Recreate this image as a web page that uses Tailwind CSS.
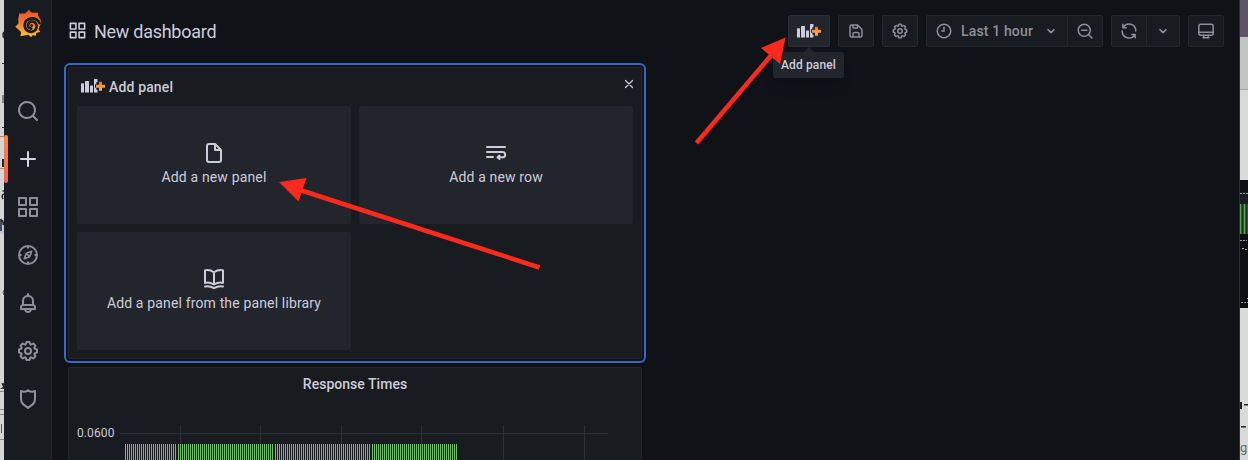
<!DOCTYPE html>
<html lang="en">
<head>
<meta charset="utf-8">
<title>New dashboard</title>
<script src="https://cdn.jsdelivr.net/npm/@tailwindcss/browser@4"></script>
</head>
<body class="w-[1248px] h-[460px] overflow-hidden bg-[#111217] font-['Roboto',sans-serif] text-[#ccccdc] text-sm">
<svg class="absolute size-0">
  <defs>
    <linearGradient id="flame" gradientUnits="userSpaceOnUse" x1="0" y1="10" x2="0" y2="37"><stop offset="0" stop-color="#f04e2c"/><stop offset=".45" stop-color="#f47a30"/><stop offset="1" stop-color="#fcc22c"/></linearGradient>
    <linearGradient id="plusfill" x1="0" y1="0" x2="0" y2="1"><stop offset="0" stop-color="#f2663a"/><stop offset=".5" stop-color="#f59a3c"/><stop offset="1" stop-color="#f5b73d"/></linearGradient>
    <symbol id="apps" viewBox="0 0 24 24"><path d="M10,13H3a1,1,0,0,0-1,1v7a1,1,0,0,0,1,1h7a1,1,0,0,0,1-1V14A1,1,0,0,0,10,13ZM9,20H4V15H9ZM21,2H14a1,1,0,0,0-1,1v7a1,1,0,0,0,1,1h7a1,1,0,0,0,1-1V3A1,1,0,0,0,21,2ZM20,9H15V4h5Zm1,4H14a1,1,0,0,0-1,1v7a1,1,0,0,0,1,1h7a1,1,0,0,0,1-1V14A1,1,0,0,0,21,13Zm-1,7H15V15h5ZM10,2H3A1,1,0,0,0,2,3v7a1,1,0,0,0,1,1h7a1,1,0,0,0,1-1V3A1,1,0,0,0,10,2ZM9,9H4V4H9Z"/></symbol>
    <symbol id="cog" viewBox="0 0 24 24"><path d="M21.32,9.55l-1.89-.63.89-1.78A1,1,0,0,0,20.13,6L18,3.87a1,1,0,0,0-1.15-.19l-1.78.89-.63-1.89A1,1,0,0,0,13.5,2h-3a1,1,0,0,0-.95.68L8.92,4.57,7.14,3.68A1,1,0,0,0,6,3.87L3.87,6a1,1,0,0,0-.19,1.15l.89,1.78-1.89.63A1,1,0,0,0,2,10.5v3a1,1,0,0,0,.68.95l1.89.63-.89,1.78A1,1,0,0,0,3.87,18L6,20.13a1,1,0,0,0,1.15.19l1.78-.89.63,1.89a1,1,0,0,0,.95.68h3a1,1,0,0,0,.95-.68l.63-1.89,1.78.89A1,1,0,0,0,18,20.13L20.13,18a1,1,0,0,0,.19-1.15l-.89-1.78,1.89-.63A1,1,0,0,0,22,13.5v-3A1,1,0,0,0,21.32,9.55ZM20,12.78l-1.2.4A2,2,0,0,0,17.64,16l.57,1.14-1.1,1.1L16,17.64a2,2,0,0,0-2.79,1.16l-.4,1.2H11.22l-.4-1.2A2,2,0,0,0,8,17.64l-1.14.57-1.1-1.1L6.36,16A2,2,0,0,0,5.2,13.18L4,12.78V11.22l1.2-.4A2,2,0,0,0,6.36,8L5.79,6.89l1.1-1.1L8,6.36A2,2,0,0,0,10.82,5.2l.4-1.2h1.56l.4,1.2A2,2,0,0,0,16,6.36l1.14-.57,1.1,1.1L17.64,8a2,2,0,0,0,1.16,2.79l1.2.4ZM12,8a4,4,0,1,0,4,4A4,4,0,0,0,12,8Zm0,6a2,2,0,1,1,2-2A2,2,0,0,1,12,14Z"/></symbol>
    <symbol id="chevron" viewBox="0 0 24 24"><path d="M8 10.200l4 4 4-4" fill="none" stroke="currentColor" stroke-width="2" stroke-linecap="round" stroke-linejoin="round"/></symbol>
    <symbol id="panel-add" viewBox="0 0 24 14"><path fill="#ccccdc" d="M0 4.700q0-.5.5-.5h2q.5 0 .5.500v8.800H0zM4 2.500q0-.5.5-.5h3q.5 0 .5.500v11H4zM9 7q0-.5.500-.5h2q.5 0 .5.500v6.500H9zM13 .5q0-.5.500-.5h2.500q.5 0 .5.500v2.700h-1.200v2H14v3.600h1.300v2h1.200v2.200q0 .5-.5.500H13z"/><path fill="url(#plusfill)" d="M18 2.700h3v3h3v3h-3v3h-3v-3h-3v-3h3z"/></symbol>
  </defs>
</svg>
<div class="relative flex h-full">
  <!-- Sliver of the window behind, left edge -->
  <div class="relative w-1 shrink-0 bg-[#d5d5d5] overflow-hidden">
    <svg class="block" width="4" height="460" viewBox="0 0 4 460">
      <path stroke="#333" fill="none" d="M2 63.500h2M2 127.500h2M3 95v8"/>
      <path stroke="#222" stroke-width="1.500" fill="none" d="M4 32q-2 3 0 6"/>
      <path stroke="#e8753d" fill="none" d="M0 136.500h4M0 168.500h4"/>
      <path stroke="#1d2740" stroke-width="2" d="M3 159v8"/>
      <path fill="#b9c6dc" d="M0 218h4v16H0z"/>
      <path stroke="#222" stroke-width="1.500" fill="none" d="M4 191h-1.500M4 194q-3 1-1 5M1 219v12M1 220q3 1 2 5M4 384h-1.500l1.500 3-1.500 1h2"/>
      <path stroke="#4550a8" fill="none" d="M4 290q-2 2 0 5"/>
      <path stroke="#888" d="M0 391.500h4M0 409.500h4M0 414.500h4M0 439.500h4"/>
      <path stroke="#555" d="M1.500 424v9"/>
    </svg>
  </div>

  <nav class="relative w-12 shrink-0 bg-[#181b1f] border-r border-[#24262b] flex flex-col items-center text-[#8e8f99] fill-current">
    <svg class="mt-[9px] w-7 h-[29px] shrink-0" viewBox="14 9 28 29">
      <path fill="url(#flame)" d="M29.200 9.800Q30.500 12.600 32.200 12.800L38 12.800Q37.500 15.800 39 17.300 41 19.500 41.300 23L39.800 25.500 38.500 29.500 40.300 32 36.500 32.700 35.500 36 32.800 35 31 37.200 28.500 34.800 20.500 36.300 21 32 19.500 30.500 15.200 26.700 18.500 23.500 18.200 19.200 19.200 13.500 25 13.600z"/>
      <path fill="none" stroke="#181b1f" stroke-width="2.600" stroke-linecap="round" d="M39.700 23.200Q37 18.200 31.500 18.400 24.800 19.300 24.600 25.500 25.300 31.700 31.600 31.900 36.600 31 36.700 25.800 35.800 21.300 31.300 21.500 27.800 22.300 27.900 25.800 28.600 28.700 31.300 28.600"/>
      <circle cx="31.600" cy="25.500" r="1.500" fill="#181b1f"/>
    </svg>
    <svg class="mt-[61px] size-6 shrink-0" viewBox="0 0 24 24"><path d="M21.71,20.29,18,16.61A9,9,0,1,0,16.61,18l3.68,3.68a1,1,0,0,0,1.42,0A1,1,0,0,0,21.71,20.29ZM11,18a7,7,0,1,1,7-7A7,7,0,0,1,11,18Z"/></svg>
    <div class="relative mt-3 h-12 w-full flex items-center justify-center text-[#d5d5e2]">
      <div class="absolute left-0 top-0 h-12 w-1 rounded-[2px] bg-linear-to-b from-[#ff8833] to-[#f55f53]"></div>
      <svg class="size-6" viewBox="0 0 24 24"><path d="M19,11H13V5a1,1,0,0,0-2,0v6H5a1,1,0,0,0,0,2h6v6a1,1,0,0,0,2,0V13h6a1,1,0,0,0,0-2Z"/></svg>
    </div>
    <svg class="mt-3 size-6 shrink-0"><use href="#apps"/></svg>
    <svg class="mt-6 size-6 shrink-0" viewBox="0 0 24 24" fill="none" stroke="currentColor" stroke-width="2"><circle cx="12" cy="12" r="9"/><path stroke-linejoin="round" d="M15.700 8.300l-2 5.400-5.400 2 2-5.400zM10.500 10.500l3 3" stroke-width="1.700"/><path d="M12 3v2.500M12 18.500V21M3 12h2.500M18.500 12H21"/></svg>
    <svg class="mt-6 size-6 shrink-0" viewBox="0 0 24 24"><path d="M18,13.180V10a6,6,0,0,0-5-5.910V3a1,1,0,0,0-2,0V4.090A6,6,0,0,0,6,10v3.180A3,3,0,0,0,4,16v2a1,1,0,0,0,1,1H8.140a4,4,0,0,0,7.720,0H19a1,1,0,0,0,1-1V16A3,3,0,0,0,18,13.180ZM8,10a4,4,0,0,1,8,0v3H8Zm4,10a2,2,0,0,1-1.720-1h3.440A2,2,0,0,1,12,20Zm6-3H6V16a1,1,0,0,1,1-1H17a1,1,0,0,1,1,1Z"/></svg>
    <svg class="mt-6 size-6 shrink-0"><use href="#cog"/></svg>
    <svg class="mt-6 size-6 shrink-0" viewBox="0 0 24 24" fill="none" stroke="currentColor" stroke-width="2" stroke-linejoin="round"><path d="M12 3.300q3.500 2.300 7 .7v7.900q0 3.700-3 6L12 20.900 8 17.900q-3-2.300-3-6V4q3.500 1.600 7-.7z"/></svg>
  </nav>

  <main class="flex-1 min-w-0 border-r border-[#2c2d33]">
    <header class="flex h-[63px] items-start pl-4 pr-[15px] pt-[15px] text-[#8e8f99]">
      <div class="flex items-center h-8 text-[#ccccdc]">
        <svg class="w-[19px] h-[19px] -mt-[2px] fill-current"><use href="#apps"/></svg>
        <h1 class="ml-[7px] mt-[2px] text-[18px] leading-8 tracking-[-0.27px]">New dashboard</h1>
      </div>
      <div class="ml-auto flex gap-2 fill-current">
        <div class="relative w-[42px] h-8 rounded-[2px] bg-[#22252b] border border-[#2d2f36] flex items-center justify-center">
          <svg class="w-6 h-[14px]"><use href="#panel-add"/></svg>
          <div class="absolute left-[-16px] top-[36px] w-[71px] h-[26px] rounded-[2px] bg-[#22252b] text-[#ccccdc] text-xs font-medium leading-[26px] text-center tracking-[0.15px] whitespace-nowrap shadow-lg">Add panel
            <div class="absolute left-[31px] -top-[5px] border-x-[5px] border-b-[5px] border-x-transparent border-b-[#22252b]"></div>
          </div>
        </div>
        <div class="w-9 h-8 rounded-[2px] bg-[#181b1f] border border-[#25272c] flex items-center justify-center">
          <svg class="size-[18px]" viewBox="0 0 24 24"><path d="M20.710,9.290l-6-6a1,1,0,0,0-.32-.21A1.090,1.090,0,0,0,14,3H6A3,3,0,0,0,3,6V18a3,3,0,0,0,3,3H18a3,3,0,0,0,3-3V10A1,1,0,0,0,20.710,9.290ZM9,5h4V7H9Zm6,14H9V16a1,1,0,0,1,1-1h4a1,1,0,0,1,1,1Zm4-1a1,1,0,0,1-1,1H17V16a3,3,0,0,0-3-3H10a3,3,0,0,0-3,3v3H6a1,1,0,0,1-1-1V6A1,1,0,0,1,6,5H7V8A1,1,0,0,0,8,9h6a1,1,0,0,0,1-1V6.410l4,4Z"/></svg>
        </div>
        <div class="w-9 h-8 rounded-[2px] bg-[#181b1f] border border-[#25272c] flex items-center justify-center"><svg class="size-[18px]"><use href="#cog"/></svg></div>
        <div class="flex h-8 w-[177px] rounded-[2px] bg-[#181b1f] border border-[#25272c]">
          <div class="flex items-center w-[141px] pl-2 border-r border-[#25272c]">
            <svg class="size-[18px]" viewBox="0 0 24 24" fill="none" stroke="currentColor" stroke-width="2" stroke-linecap="round"><circle cx="12" cy="12" r="9"/><path d="M12 7v5H9"/></svg>
            <span class="ml-2 text-sm font-medium tracking-[0.15px] whitespace-nowrap">Last 1 hour</span>
            <svg class="ml-auto mr-[7px] size-[18px]"><use href="#chevron"/></svg>
          </div>
          <div class="flex-1 flex items-center justify-center"><svg class="size-[18px]" viewBox="0 0 24 24" fill="none" stroke="currentColor" stroke-width="2" stroke-linecap="round"><circle cx="11" cy="11" r="8"/><path d="M17 17l4.200 4.200M7.500 11h7"/></svg></div>
        </div>
        <div class="flex h-8 w-[69px] rounded-[2px] bg-[#181b1f] border border-[#25272c]">
          <div class="w-[35px] flex items-center justify-center border-r border-[#25272c]"><svg class="size-[18px]" viewBox="0 0 24 24" fill="none" stroke="currentColor" stroke-width="2" stroke-linecap="round" stroke-linejoin="round"><path d="M3.800 3v4.500h4.500M4.200 7.200A9 9 0 0 1 21 12M20.200 21v-4.500h-4.500M19.800 16.800A9 9 0 0 1 3 12"/></svg></div>
          <div class="flex-1 flex items-center justify-center"><svg class="size-[18px]"><use href="#chevron"/></svg></div>
        </div>
        <div class="w-9 h-8 rounded-[2px] bg-[#181b1f] border border-[#25272c] flex items-center justify-center"><svg class="size-[18px]" viewBox="0 0 24 24" fill="none" stroke="currentColor" stroke-width="2" stroke-linejoin="round" stroke-linecap="round"><rect x="2.500" y="3" width="19" height="14.500" rx="2.500"/><path d="M2.500 13.500h19M9 17.500v3.500M15 17.500v3.500M8 21h8"/></svg></div>
      </div>
    </header>

    <section class="ml-3 w-[582px] h-[300px] rounded-[6px] border-2 border-[#3668c4] p-[2px]">
      <div class="h-full rounded-[2px] bg-[#181b1f] border border-[#25272c] px-2">
        <div class="flex items-center h-[38px] pl-1">
          <svg class="w-6 h-[14px] -mt-[2px]"><use href="#panel-add"/></svg>
          <h2 class="ml-1 text-sm font-medium tracking-[0.15px]">Add panel</h2>
          <svg class="ml-auto -mt-[6px] -mr-px size-[10px]" viewBox="0 0 10 10" fill="none" stroke="currentColor" stroke-width="1.300" stroke-linecap="round"><path d="M1.500 1.500l7 7M8.500 1.500l-7 7"/></svg>
        </div>
        <div class="grid grid-cols-2 auto-rows-[118px] gap-2">
          <div class="rounded-[2px] bg-[#22252b] flex flex-col items-center pt-[35px]">
            <svg class="size-6 fill-current" viewBox="0 0 24 24"><path d="M20,8.940a1.310,1.310,0,0,0-.06-.27l0-.09a1.070,1.070,0,0,0-.19-.28h0l-6-6h0a1.070,1.070,0,0,0-.28-.19l-.09,0L13.060,2H7A3,3,0,0,0,4,5V19a3,3,0,0,0,3,3H17a3,3,0,0,0,3-3V9S20,9,20,8.940ZM14,5.410,16.590,8H14ZM18,19a1,1,0,0,1-1,1H7a1,1,0,0,1-1-1V5A1,1,0,0,1,7,4h5V9a1,1,0,0,0,1,1h5Z"/></svg>
            <span class="mt-[2px] leading-5 tracking-[0.15px]">Add a new panel</span>
          </div>
          <div class="rounded-[2px] bg-[#22252b] flex flex-col items-center pt-[35px]">
            <svg class="size-6" viewBox="0 0 24 24" fill="none" stroke="currentColor" stroke-width="2" stroke-linecap="round" stroke-linejoin="round"><path d="M3 6h18M3 11h15.500a2.500 2.500 0 0 1 0 5.300H14M15.500 14.500l-2 1.800 2 1.700M3 16h6"/></svg>
            <span class="mt-[2px] leading-5 tracking-[0.15px]">Add a new row</span>
          </div>
          <div class="rounded-[2px] bg-[#22252b] flex flex-col items-center pt-[35px]">
            <svg class="size-6" viewBox="0 0 24 24" fill="none" stroke="currentColor" stroke-width="2" stroke-linecap="round" stroke-linejoin="round"><path d="M12 5.300Q7.500 2.200 3 3.400v12.500q4.500-1 9 1.600 4.500-2.600 9-1.600V3.400Q16.500 2.200 12 5.300zM12 5.300v12M3 19.500q4.500-1 9 1.600 4.500-2.600 9-1.600"/></svg>
            <span class="mt-[2px] leading-5 tracking-[0.15px]">Add a panel from the panel library</span>
          </div>
        </div>
      </div>
    </section>

    <section class="ml-4 mt-1 w-[574px] h-[100px] rounded-[2px] bg-[#181b1f] border border-[#25272c]">
      <h2 class="h-8 leading-8 text-center text-sm font-medium tracking-[0.03px]">Response Times</h2>
      <div class="flex">
        <span class="w-[51px] pl-2 pt-[25px] text-xs leading-4 tracking-[0.1px]">0.0600</span>
        <svg class="block" width="490" height="60" viewBox="0 0 490 60">
          <path stroke="#2d3034" fill="none" d="M0 33.500h488M60.500 25v35M140.500 25v35M221.500 25v35M301.500 25v35M383.500 25v35M464.500 25v35"/>
          <g shape-rendering="crispEdges" stroke="#73bf69" stroke-width="16" stroke-dasharray="1 1" fill="none"><path d="M5 52h52M58 52h96M155 52h96M252 52h86"/></g>
        </svg>
      </div>
    </section>
  </main>

  <!-- Sliver of the window behind, right edge -->
  <div class="w-2 shrink-0 overflow-hidden">
    <svg class="block" width="8" height="460" viewBox="0 0 8 460">
      <path fill="#5d5468" d="M0 0h8v37H0z"/><path fill="#c3c3c3" d="M0 37h8v52H0z"/><path fill="#a8a8a8" d="M0 89h8v1H0z"/><path fill="#dadada" d="M0 90h8v90H0zM0 308h8v152H0z"/>
      <path fill="#0e0f12" d="M0 180h8v128H0z"/><path fill="#181b1f" d="M0 192h8v42H0z"/>
      <path stroke="#999" stroke-dasharray="2 1" d="M0 193.500h8M0 240.500h7M1 302.500h7"/>
      <path fill="#2d5a30" d="M0 204h8v30H0z"/><path stroke="#5aa552" d="M.5 204v30M4.500 204v30"/><path stroke="#1c2b20" d="M2.500 204v30M6.500 204v30"/>
      <path stroke="#aaa" stroke-dasharray="2 1" d="M2 248.500h3M5 249.500h3M7 298.500h1"/>
      <path fill="#222" d="M0 402h2v7H0zM4 404h4v1.500H4zM1 426h5v1.500H1z"/>
      <text x="0" y="452" font-size="13" fill="#666">g</text>
    </svg>
  </div>

  <!-- Annotation arrows over the page -->
  <svg class="absolute inset-0 pointer-events-none" width="1248" height="460" viewBox="0 0 1248 460">
    <g stroke="#fc2a1c" stroke-width="4.600"><path d="M696.500 143L774 52"/><path d="M539.500 267.500L300 190"/></g>
    <path fill="#fc2a1c" d="M785.500 37.500L780 64 761 48zM279 182l27.500-4L298.500 201.500z"/>
  </svg>
</div>
</body>
</html>
